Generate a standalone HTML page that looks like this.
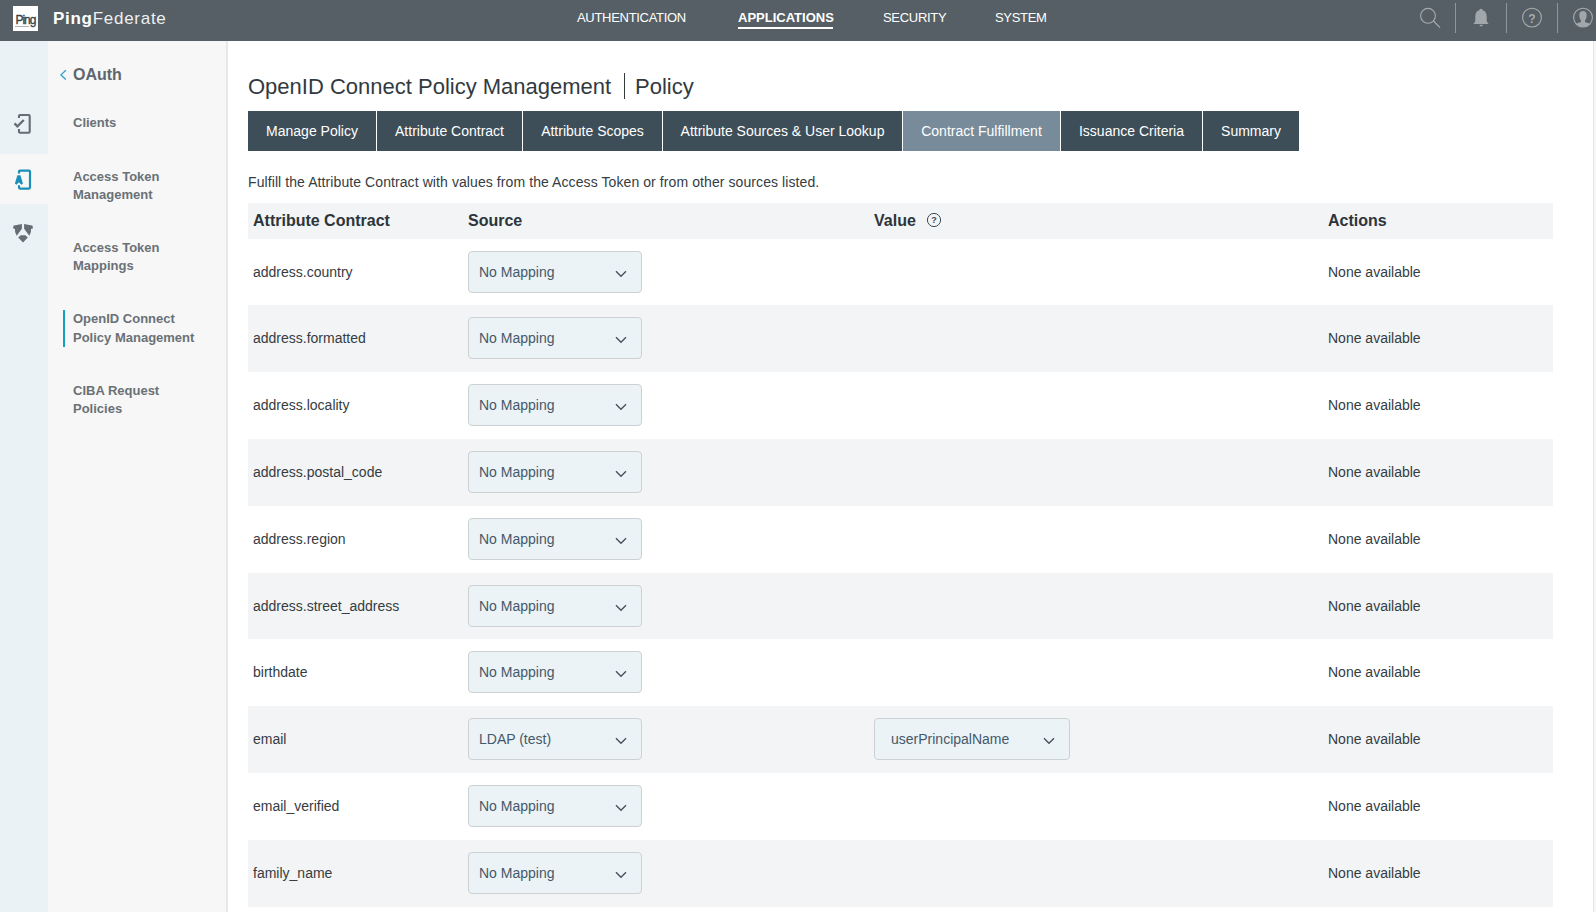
<!DOCTYPE html>
<html><head><meta charset="utf-8">
<style>
*{box-sizing:border-box;margin:0;padding:0}
html,body{width:1596px;height:912px;overflow:hidden;background:#fff;font-family:"Liberation Sans",sans-serif}
.abs{position:absolute}
#hdr{position:absolute;left:0;top:0;width:1596px;height:41px;background:#555f65}
#logo{position:absolute;left:13px;top:6px;width:25px;height:25px;background:#fff}
#brand{position:absolute;left:53px;top:9px;font-size:17px;color:#fff;letter-spacing:0.72px;white-space:nowrap}
.nav{position:absolute;top:10px;font-size:13px;color:#fff;letter-spacing:-0.3px;white-space:nowrap;line-height:16px}
#rail{position:absolute;left:0;top:41px;width:48px;height:871px;background:#ebf2f5}
#railsel{position:absolute;left:0;top:154px;width:48px;height:50px;background:#f7f7f7}
#side{position:absolute;left:48px;top:41px;width:178px;height:871px;background:#f7f7f7}
#sideb{position:absolute;left:226px;top:41px;width:2px;height:871px;background:#e6e8e9}
.si{position:absolute;left:73px;font-size:13px;font-weight:bold;color:#6a7176;line-height:18.3px;white-space:nowrap}
#title2{position:absolute;left:635px;top:73px;font-size:22px;color:#323a40;white-space:nowrap;line-height:28px}
#title{position:absolute;left:248px;top:73px;font-size:22px;color:#323a40;white-space:nowrap;line-height:28px}
#tabs{position:absolute;left:248px;top:111px;height:40px}
.tab{position:absolute;top:0;height:40px;background:#3e4e59;color:#fff;font-size:14px;line-height:40px;text-align:center;white-space:nowrap}
.tab.act{background:#778b9a}
#desc{position:absolute;left:248px;top:174px;font-size:14px;letter-spacing:0.087px;color:#353c42;white-space:nowrap;line-height:16px}
#thead{position:absolute;left:248px;top:203px;width:1305px;height:36px;background:#f2f4f5}
.th{position:absolute;top:9px;font-size:16px;font-weight:bold;color:#2d353b;white-space:nowrap;line-height:18px}
.row{position:absolute;left:248px;width:1305px;height:67px}
.row.g{background:#f2f4f5}
.c1{position:absolute;left:5px;top:25px;font-size:14px;color:#353c42;line-height:16px;white-space:nowrap}
.c4{position:absolute;left:1080px;top:25px;font-size:14px;color:#353c42;line-height:16px;white-space:nowrap}
.sel{position:absolute;left:220px;top:12px;width:174px;height:42px;background:#ebf3f6;border:1px solid #cdd1d3;border-radius:4px}
.sel span{position:absolute;left:10px;top:12px;font-size:14px;color:#45586a;line-height:16px;white-space:nowrap}
.sel.val{left:626px;top:12px;width:196px;height:42px}
.sel.val span{left:16px}
.sel svg{position:absolute;right:14px;top:18px}
</style></head><body>
<div id="hdr">

  <div id="logo"><div style="position:absolute;left:2.6px;top:7.8px;font-size:12px;color:#3a4248;letter-spacing:-1.1px;line-height:12px;-webkit-text-stroke:0.35px #3a4248">Ping</div><div style="position:absolute;left:2.3px;top:19.8px;width:14px;height:1.6px;background:#aeb2b5"></div></div>
  <svg class="abs" style="left:1400px;top:0" width="196" height="41" viewBox="1400 0 196 41">
    <circle cx="1428" cy="15.8" r="7.4" fill="none" stroke="#a6abaf" stroke-width="1.1"/>
    <path d="M1433.5 21 L1440 27.6" stroke="#a6abaf" stroke-width="1.2" fill="none"/>
    <rect x="1455" y="3" width="1" height="30" fill="#8e969b"/>
    <rect x="1506" y="3" width="1" height="30" fill="#8e969b"/>
    <rect x="1557" y="3" width="1" height="30" fill="#8e969b"/>
    <path d="M1481 8.7 C1479.8 8.7 1479.3 9.6 1479.3 10.3 C1476.5 11 1475.3 13.5 1475.3 16.5 L1475.3 20.5 C1475.3 21.8 1474.3 23 1473.3 23.9 L1488.7 23.9 C1487.7 23 1486.7 21.8 1486.7 20.5 L1486.7 16.5 C1486.7 13.5 1485.5 11 1482.7 10.3 C1482.7 9.6 1482.2 8.7 1481 8.7 Z" fill="#a2a7ab"/>
    <rect x="1479.5" y="24.8" width="3.2" height="1.4" rx="0.7" fill="#a2a7ab"/>
    <circle cx="1532" cy="17.6" r="9.4" fill="none" stroke="#a6abaf" stroke-width="1.1"/>
    <text x="1532" y="22.5" font-family="Liberation Sans" font-weight="bold" font-size="12" fill="#a6abaf" text-anchor="middle">?</text>
    <defs><clipPath id="uc"><circle cx="1583" cy="17.6" r="9.4"/></clipPath></defs>
    <circle cx="1583" cy="17.6" r="9.4" fill="none" stroke="#a6abaf" stroke-width="1.1"/>
    <g clip-path="url(#uc)" fill="#a2a7ab">
      <path d="M1583 11 C1580.6 11 1579.3 12.3 1579.3 15 C1579.3 17.5 1580 19.4 1581 20.4 L1581 22 C1578 22.8 1575.5 23.8 1573.5 25.5 L1573.5 30 L1592.5 30 L1592.5 25.5 C1590.5 23.8 1588 22.8 1585 22 L1585 20.4 C1586 19.4 1586.7 17.5 1586.7 15 C1586.7 12.3 1585.4 11 1583 11 Z"/>
    </g>
  </svg>
  <div id="brand"><b>Ping</b><span style="color:#eef0f1">Federate</span></div>
  <div class="nav" style="left:577px">AUTHENTICATION</div>
  <div class="nav" style="left:738px;font-weight:bold;letter-spacing:0">APPLICATIONS</div>
  <div class="abs" style="left:738px;top:26.8px;width:95px;height:2.4px;background:#fff"></div>
  <div class="nav" style="left:883px">SECURITY</div>
  <div class="nav" style="left:995px">SYSTEM</div>
</div>
<div id="rail"></div>
<div id="railsel"></div>
<div id="side"></div>
<div id="sideb"></div>

<svg class="abs" style="left:0;top:41px" width="48" height="220" viewBox="0 41 48 220">
  <path d="M19 118 L19 116 Q19 115 20 115 L28.7 115 Q29.7 115 29.7 116 L29.7 131.7 Q29.7 132.7 28.7 132.7 L20 132.7 Q19 132.7 19 131.7 L19 129" fill="none" stroke="#656e75" stroke-width="2.1"/>
  <path d="M14.5 123.4 L17.4 126.4 L23.8 120" fill="none" stroke="#656e75" stroke-width="2.3"/>
  <path d="M19 173.6 L19 171.6 Q19 170.6 20 170.6 L29 170.6 Q30 170.6 30 171.6 L30 187.6 Q30 188.6 29 188.6 L20 188.6 Q19 188.6 19 187.6 L19 185.3" fill="none" stroke="#1a8fba" stroke-width="2.2"/>
  <path d="M17.4 175.2 L20.4 175.2 L22.9 183.6 L21.4 184.7 L18.9 182.2 L16.4 184.7 L14.9 183.6 Z" fill="#1a8fba"/>
  <path d="M13.0 228.2 L13.6 225.6 L15.6 225.2 L21.9 224.0 L21.9 228.8 L16.7 235.7 L15.1 232.0 L15.0 229.1 Z" fill="#656e75"/>
  <path d="M33.0 228.2 L32.4 225.6 L30.4 225.2 L24.1 224.0 L24.1 228.8 L29.3 235.7 L30.9 232.0 L31.0 229.1 Z" fill="#656e75"/>
  <path d="M18.2 237.4 L20.6 235.3 L25.4 235.3 L27.8 237.4 L23 242.6 Z" fill="#656e75"/>
</svg>
<svg class="abs" style="left:55px;top:65px" width="16" height="20" viewBox="55 65 16 20"><path d="M65.8 70.3 L61 74.9 L65.8 79.5" fill="none" stroke="#2a9fc9" stroke-width="1.3"/></svg>
<div class="si" style="left:73px;top:65.5px;font-size:16px;color:#5d666e">OAuth</div>
<div class="si" style="top:114px">Clients</div>
<div class="si" style="top:168px">Access Token<br>Management</div>
<div class="si" style="top:239px">Access Token<br>Mappings</div>
<div class="si" style="top:309.8px;line-height:18.8px">OpenID Connect<br>Policy Management</div>
<div class="si" style="top:381.8px">CIBA Request<br>Policies</div>
<div class="abs" style="left:63px;top:310px;width:2px;height:36.8px;background:#14a0bf"></div>

<div class="abs" style="left:1593px;top:41px;width:1px;height:871px;background:#e3e5e6"></div><div class="abs" style="left:1594px;top:41px;width:2px;height:871px;background:#f7f7f7"></div>
<div id="title">OpenID Connect Policy Management</div>
<div class="abs" style="left:624px;top:73px;width:1px;height:26px;background:#323a40"></div>
<div id="title2">Policy</div>
<div id="tabs">
  <div class="tab" style="left:0;width:128px">Manage Policy</div>
  <div class="tab" style="left:129px;width:145px">Attribute Contract</div>
  <div class="tab" style="left:275px;width:139px">Attribute Scopes</div>
  <div class="tab" style="left:415px;width:239px">Attribute Sources &amp; User Lookup</div>
  <div class="tab act" style="left:655px;width:157px">Contract Fulfillment</div>
  <div class="tab" style="left:813px;width:141px">Issuance Criteria</div>
  <div class="tab" style="left:955px;width:96px">Summary</div>
</div>
<div id="desc">Fulfill the Attribute Contract with values from the Access Token or from other sources listed.</div>
<div id="thead">
  <div class="th" style="left:5px">Attribute Contract</div>
  <div class="th" style="left:220px">Source</div>
  <div class="th" style="left:626px">Value</div>
  <svg class="abs" style="left:678px;top:9px" width="16" height="16" viewBox="0 0 16 16"><circle cx="8" cy="8" r="6.6" fill="none" stroke="#3e4a53" stroke-width="1"/><text x="8" y="11.3" font-family="Liberation Sans" font-weight="bold" font-size="9" fill="#3e4a53" text-anchor="middle">?</text></svg>
  <div class="th" style="left:1080px">Actions</div>
</div>
<!--ROWS-->
<div class="row" style="top:239.00px;height:66.00px"><div class="c1">address.country</div><div class="sel"><span>No Mapping</span><svg width="12" height="8" viewBox="0 0 12 8"><path d="M1 1.2 L6 6.2 L11 1.2" fill="none" stroke="#44535f" stroke-width="1.4"/></svg></div><div class="c4">None available</div></div>
<div class="row g" style="top:305.00px;height:66.89px"><div class="c1">address.formatted</div><div class="sel"><span>No Mapping</span><svg width="12" height="8" viewBox="0 0 12 8"><path d="M1 1.2 L6 6.2 L11 1.2" fill="none" stroke="#44535f" stroke-width="1.4"/></svg></div><div class="c4">None available</div></div>
<div class="row" style="top:371.89px;height:66.89px"><div class="c1">address.locality</div><div class="sel"><span>No Mapping</span><svg width="12" height="8" viewBox="0 0 12 8"><path d="M1 1.2 L6 6.2 L11 1.2" fill="none" stroke="#44535f" stroke-width="1.4"/></svg></div><div class="c4">None available</div></div>
<div class="row g" style="top:438.78px;height:66.89px"><div class="c1">address.postal_code</div><div class="sel"><span>No Mapping</span><svg width="12" height="8" viewBox="0 0 12 8"><path d="M1 1.2 L6 6.2 L11 1.2" fill="none" stroke="#44535f" stroke-width="1.4"/></svg></div><div class="c4">None available</div></div>
<div class="row" style="top:505.67px;height:66.89px"><div class="c1">address.region</div><div class="sel"><span>No Mapping</span><svg width="12" height="8" viewBox="0 0 12 8"><path d="M1 1.2 L6 6.2 L11 1.2" fill="none" stroke="#44535f" stroke-width="1.4"/></svg></div><div class="c4">None available</div></div>
<div class="row g" style="top:572.56px;height:66.89px"><div class="c1">address.street_address</div><div class="sel"><span>No Mapping</span><svg width="12" height="8" viewBox="0 0 12 8"><path d="M1 1.2 L6 6.2 L11 1.2" fill="none" stroke="#44535f" stroke-width="1.4"/></svg></div><div class="c4">None available</div></div>
<div class="row" style="top:639.45px;height:66.89px"><div class="c1">birthdate</div><div class="sel"><span>No Mapping</span><svg width="12" height="8" viewBox="0 0 12 8"><path d="M1 1.2 L6 6.2 L11 1.2" fill="none" stroke="#44535f" stroke-width="1.4"/></svg></div><div class="c4">None available</div></div>
<div class="row g" style="top:706.34px;height:66.89px"><div class="c1">email</div><div class="sel"><span>LDAP (test)</span><svg width="12" height="8" viewBox="0 0 12 8"><path d="M1 1.2 L6 6.2 L11 1.2" fill="none" stroke="#44535f" stroke-width="1.4"/></svg></div><div class="sel val"><span>userPrincipalName</span><svg width="12" height="8" viewBox="0 0 12 8"><path d="M1 1.2 L6 6.2 L11 1.2" fill="none" stroke="#44535f" stroke-width="1.4"/></svg></div><div class="c4">None available</div></div>
<div class="row" style="top:773.23px;height:66.89px"><div class="c1">email_verified</div><div class="sel"><span>No Mapping</span><svg width="12" height="8" viewBox="0 0 12 8"><path d="M1 1.2 L6 6.2 L11 1.2" fill="none" stroke="#44535f" stroke-width="1.4"/></svg></div><div class="c4">None available</div></div>
<div class="row g" style="top:840.12px;height:66.89px"><div class="c1">family_name</div><div class="sel"><span>No Mapping</span><svg width="12" height="8" viewBox="0 0 12 8"><path d="M1 1.2 L6 6.2 L11 1.2" fill="none" stroke="#44535f" stroke-width="1.4"/></svg></div><div class="c4">None available</div></div>
<!--/ROWS-->
</body></html>
